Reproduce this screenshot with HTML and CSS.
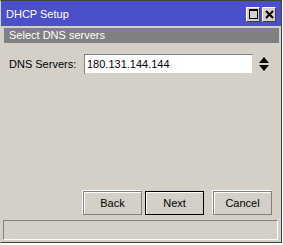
FILE: index.html
```html
<!DOCTYPE html>
<html lang="en">
<head>
  <meta charset="UTF-8">
  <title>DHCP Setup</title>
  <link rel="stylesheet" href="styles.css">
</head>
<body>
  <div class="window">
    <div class="titlebar">
      <span class="title">DHCP Setup</span>
      <div class="tb-buttons">
        <span class="tb-btn"><span class="max-icon"></span></span>
        <span class="tb-btn">
          <svg width="9" height="9" viewBox="0 0 9 9"><path d="M1 1 L8 8 M8 1 L1 8" stroke="#000" stroke-width="2"/></svg>
        </span>
      </div>
    </div>
    <div class="section">Select DNS servers</div>
    <div class="field-row">
      <label class="label">DNS Servers:</label>
      <div class="input">180.131.144.144</div>
      <svg class="spinner" width="10" height="14" viewBox="0 0 10 14"><path d="M5 0 L10 6 L0 6 Z M0 8 L10 8 L5 14 Z" fill="#000"/></svg>
    </div>
    <div class="spacer"></div>
    <div class="buttons">
      <button class="btn">Back</button>
      <button class="btn default">Next</button>
      <button class="btn cancel">Cancel</button>
    </div>
    <div class="statusbar"></div>
  </div>
</body>
</html>
```

FILE: styles.css
```css
html, body { margin: 0; background: #fff; }
body { font-family: "Liberation Sans", Arial, sans-serif; font-size: 11px; color: #000; }
.window { width: 282px; height: 243px; box-sizing: border-box; background: #d4d0c8; border: 1px solid #404040; border-left-color: #d4d0c8; display: flex; flex-direction: column; }
.titlebar { height: 25px; background: #4b4fc9; color: #fff; display: flex; align-items: center; padding-left: 5px; }
.title { flex: 1; font-size: 11px; }
.tb-buttons { display: flex; gap: 2px; margin-right: 5px; margin-top: 1px; }
.tb-btn { width: 12px; height: 13px; background: #d4d0c8; border: 1px solid; border-color: #fff #404040 #404040 #fff; display: flex; align-items: center; justify-content: center; }
.max-icon { width: 7px; height: 7px; border: 1px solid #000; border-top-width: 2px; }
.section { margin: 2px 2px 0 3px; height: 15px; line-height: 15px; background: #808080; color: #fff; padding-left: 5px; }
.field-row { display: flex; align-items: center; margin-top: 11px; padding-left: 8px; }
.label { width: 75px; }
.input { width: 165px; height: 18px; line-height: 18px; background: #fff; border: 1px solid; border-color: #808080 #d4d0c8 #d4d0c8 #808080; padding-left: 2px; }
.spinner { margin-left: 6px; }
.spacer { flex: 1; }
.buttons { display: flex; padding-left: 82px; gap: 3px; }
.btn { width: 59px; height: 24px; font-family: inherit; font-size: 11px; background: #d4d0c8; border: 1px solid #808080; box-shadow: inset 1px 1px 0 #fff, -1px -1px 0 #fff; padding: 0; color: #000; }
.btn.default { border-color: #000; box-shadow: inset 1px 1px 0 #fff; }
.btn.cancel { margin-left: 6px; }
.statusbar { margin: 5px 3px 2px 2px; height: 18px; border: 1px solid; border-color: #808080 #fff #fff #808080; }
```
